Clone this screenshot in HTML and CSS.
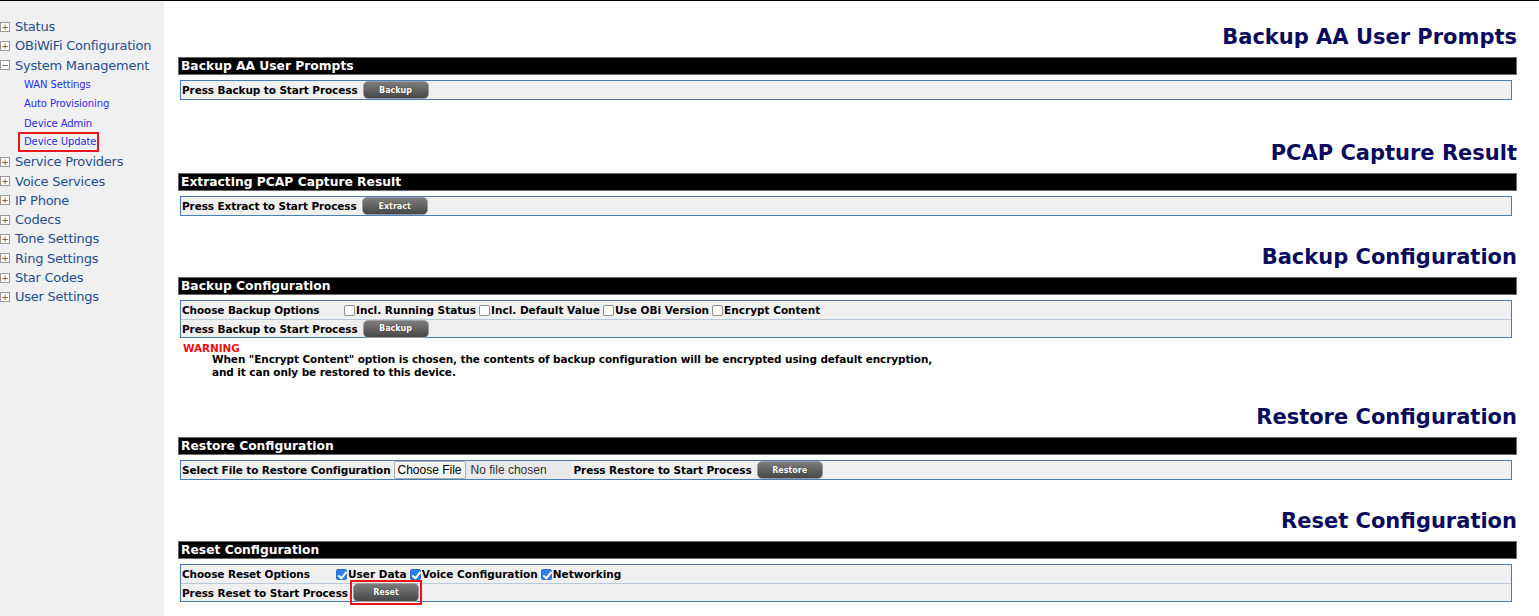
FILE: index.html
```html
<!DOCTYPE html>
<html>
<head>
  <title>Device Update</title>
  <link rel="stylesheet" href="styles.css">
</head>
<body>
  <div class="sidebar">
    <ul class="menu">
      <li><span class="tog">+</span>Status</li>
      <li><span class="tog">+</span>OBiWiFi Configuration</li>
      <li><span class="tog">&minus;</span>System Management</li>
      <li class="sub"><a href="#">WAN Settings</a></li>
      <li class="sub"><a href="#">Auto Provisioning</a></li>
      <li class="sub"><a href="#">Device Admin</a></li>
      <li class="sub"><a href="#" class="hl">Device Update</a></li>
      <li><span class="tog">+</span>Service Providers</li>
      <li><span class="tog">+</span>Voice Services</li>
      <li><span class="tog">+</span>IP Phone</li>
      <li><span class="tog">+</span>Codecs</li>
      <li><span class="tog">+</span>Tone Settings</li>
      <li><span class="tog">+</span>Ring Settings</li>
      <li><span class="tog">+</span>Star Codes</li>
      <li><span class="tog">+</span>User Settings</li>
    </ul>
  </div>

  <div class="main">
    <div class="section first">
      <h2>Backup AA User Prompts</h2>
      <div class="bar">Backup AA User Prompts</div>
      <div class="box">
        <div class="row"><span>Press Backup to Start Process</span><button class="btn">Backup</button></div>
      </div>
    </div>

    <div class="section">
      <h2>PCAP Capture Result</h2>
      <div class="bar">Extracting PCAP Capture Result</div>
      <div class="box">
        <div class="row"><span>Press Extract to Start Process</span><button class="btn">Extract</button></div>
      </div>
    </div>

    <div class="section">
      <h2>Backup Configuration</h2>
      <div class="bar">Backup Configuration</div>
      <div class="box">
        <div class="row">
          <span class="opt-label">Choose Backup Options</span>
          <label><input type="checkbox">Incl. Running Status</label>
          <label><input type="checkbox">Incl. Default Value</label>
          <label><input type="checkbox">Use OBi Version</label>
          <label><input type="checkbox">Encrypt Content</label>
        </div>
        <div class="row"><span>Press Backup to Start Process</span><button class="btn">Backup</button></div>
      </div>
      <div class="warning">
        <div class="warn-title">WARNING</div>
        <p>When "Encrypt Content" option is chosen, the contents of backup configuration will be encrypted using default encryption,<br>
        and it can only be restored to this device.</p>
      </div>
    </div>

    <div class="section">
      <h2>Restore Configuration</h2>
      <div class="bar">Restore Configuration</div>
      <div class="box">
        <div class="row">
          <span>Select File to Restore Configuration</span>
          <span class="file"><span class="file-btn">Choose File</span><span class="file-name">No file chosen</span></span>
          <span>Press Restore to Start Process</span><button class="btn">Restore</button>
        </div>
      </div>
    </div>

    <div class="section">
      <h2>Reset Configuration</h2>
      <div class="bar">Reset Configuration</div>
      <div class="box">
        <div class="row">
          <span class="opt-label reset">Choose Reset Options</span>
          <label><input type="checkbox" checked>User Data</label>
          <label><input type="checkbox" checked>Voice Configuration</label>
          <label><input type="checkbox" checked>Networking</label>
        </div>
        <div class="row"><span>Press Reset to Start Process</span><span class="hl-btn"><button class="btn">Reset</button></span></div>
      </div>
    </div>
  </div>
</body>
</html>
```

FILE: styles.css
```css
body {
  margin: 0;
  border-top: 1px solid #000;
  display: flex;
  font-family: "DejaVu Sans", Verdana, sans-serif;
  background: #fff;
}

/* left navigation */
.sidebar {
  width: 164px;
  min-height: 615px;
  background: #f0f0f0;
  flex-shrink: 0;
}
.menu {
  list-style: none;
  margin: 0;
  padding: 16px 0 0 0;
}
.menu li {
  height: 19.3px;
  line-height: 19px;
  font-size: 13px;
  letter-spacing: -0.25px;
  color: #1f4f8e;
  white-space: nowrap;
  display: flex;
  align-items: center;
}
.tog {
  width: 8px;
  height: 8px;
  border: 1px solid #9a9a9a;
  background: #fff;
  color: #555;
  font-size: 9px;
  line-height: 8px;
  letter-spacing: 0;
  text-align: center;
  margin: 0 5px 0 0;
}
.menu li.sub {
  padding-left: 24px;
  font-size: 10px;
  letter-spacing: -0.1px;
}
.menu li.sub a {
  color: #2b2bea;
  text-decoration: none;
}
.menu li.sub a.hl {
  display: inline-block;
  line-height: 12px;
  border: 2px solid #e8161b;
  padding: 2px 1px 2px 4px;
  margin-left: -6px;
}

/* content */
.main {
  flex: 1;
  padding: 0 22px 0 14px;
}
.section { margin-top: 28px; }
.section.first { margin: 23px 0 40px 0; }
.section h2 {
  margin: 0 0 7px 0;
  text-align: right;
  font-size: 21px;
  line-height: 26px;
  color: #0b0b5e;
}
.bar {
  background: #000;
  border: 1px solid #6a6a6a;
  color: #fff;
  font-weight: bold;
  font-size: 12.3px;
  height: 16px;
  line-height: 16px;
  padding-left: 2px;
}
.box {
  margin: 5px 5px 0 2px;
  border: 1px solid #4a7db8;
  background: #f0f0f0;
}
.row {
  display: flex;
  align-items: center;
  height: 18px;
  padding-left: 1px;
  font-size: 10.5px;
  letter-spacing: -0.1px;
  font-weight: bold;
  white-space: nowrap;
}
.row + .row {
  height: 17px;
  border-top: 1px solid #b9c9dc;
}
.row label {
  display: flex;
  align-items: center;
  letter-spacing: 0;
}
.opt-label { width: 160px; }
.opt-label.reset { width: 152px; }

input[type=checkbox] {
  appearance: none;
  width: 11px;
  height: 11px;
  margin: 0 1px 0 3px;
  border: 1px solid #8f8f8f;
  border-radius: 2px;
  background: #fff;
  position: relative;
}
.opt-label + label input { margin-left: 2px; }
input[type=checkbox]:checked {
  background: #2d7ff0;
  border-color: #2a6fd0;
}
input[type=checkbox]:checked::after {
  content: "";
  position: absolute;
  left: 3px;
  top: 0px;
  width: 3px;
  height: 7px;
  border: solid #fff;
  border-width: 0 2px 2px 0;
  transform: rotate(40deg);
}

.btn {
  margin-left: 5px;
  width: 66px;
  height: 18px;
  border-radius: 5px;
  border: 1px solid #9c9c9c;
  background: linear-gradient(#7d7d7d, #474747);
  color: #fff;
  font-family: "DejaVu Sans", Verdana, sans-serif;
  font-size: 8px;
  font-weight: bold;
  letter-spacing: 0;
  padding: 0;
  text-shadow: 0 0 1px #222;
}
.hl-btn {
  display: inline-flex;
  border: 2px solid #e8161b;
  padding: 1px;
  margin-left: 2px;
}
.hl-btn .btn { margin-left: 0; height: 19px; }

.file {
  display: inline-flex;
  align-items: center;
  margin-left: 3px;
  width: 177px;
  height: 18px;
  font-family: "Liberation Sans", Arial, sans-serif;
  font-weight: normal;
  font-size: 12px;
  letter-spacing: 0;
  background: #e9e9e9;
}
.file-btn {
  border: 1px solid #a9a9a9;
  border-radius: 2px;
  background: #f6f6f6;
  padding: 0 3px;
  height: 16px;
  line-height: 16px;
}
.file-name {
  padding-left: 5px;
  color: #333;
}
.file + span { margin-left: 3px; }

.warning {
  margin: 4px 0 -3px 5px;
  font-size: 10.5px;
  letter-spacing: -0.1px;
  font-weight: bold;
  line-height: 13px;
}
.warn-title { color: #f01010; height: 11px; line-height: 12px; }
.warning p {
  margin: 0 0 0 29px;
}
```
